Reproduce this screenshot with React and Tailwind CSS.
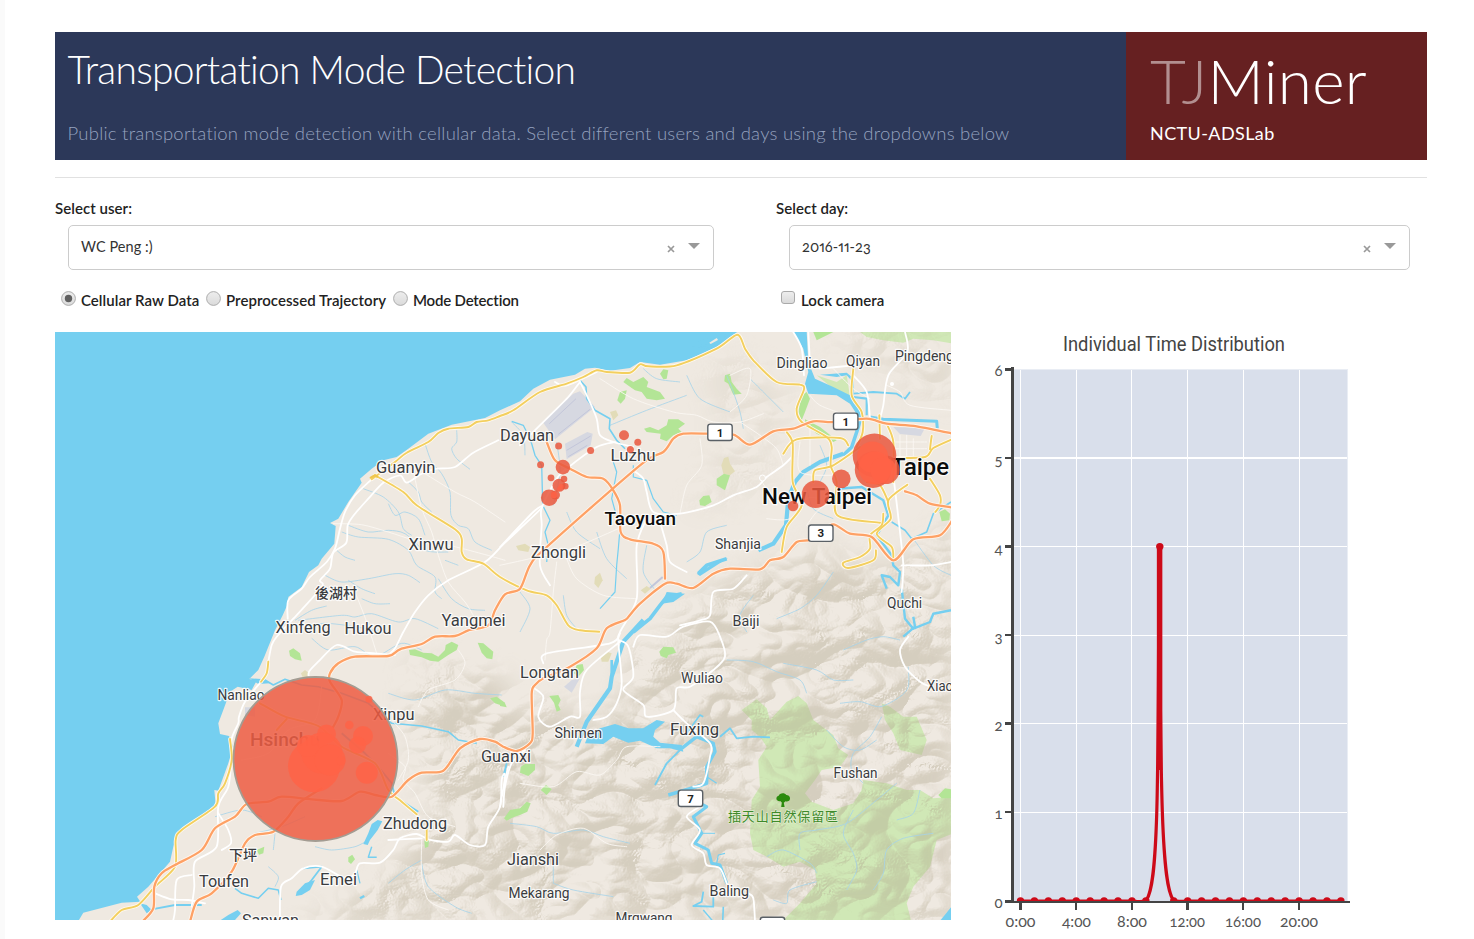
import React from "react";

/* ---------- map geometry ----------
   Every line is a list of points in one of four survey sheets (5, 6, 7, 8),
   each drawn at triple scale. A lone digit switches to that sheet. */
const SHEETS = { 5: [55, 332], 6: [500, 332], 7: [55, 620], 8: [500, 620] };

function points(src) {
  let origin = SHEETS[5];
  const out = [];
  for (const token of src.trim().split(/\s+/)) {
    if (token.indexOf(",") < 0) {
      origin = SHEETS[token];
    } else {
      const [x, y] = token.split(",").map(Number);
      out.push([origin[0] + x / 3, origin[1] + y / 3]);
    }
  }
  return out;
}

const f = (n) => n.toFixed(1);

function straight(src, close) {
  return "M" + points(src).map(([x, y]) => f(x) + " " + f(y)).join("L") + (close ? "Z" : "");
}

function smooth(src) {
  const p = points(src);
  let d = "M" + f(p[0][0]) + " " + f(p[0][1]);
  for (let i = 0; i < p.length - 1; i++) {
    const a = p[i - 1] || p[i];
    const b = p[i];
    const c = p[i + 1];
    const e = p[i + 2] || c;
    const k = 7;
    d += `C${f(b[0] + (c[0] - a[0]) / k)} ${f(b[1] + (c[1] - a[1]) / k)} ${f(c[0] - (e[0] - b[0]) / k)} ${f(c[1] - (e[1] - b[1]) / k)} ${f(c[0])} ${f(c[1])}`;
  }
  return d;
}

const LAND =
  "6 740,-20 700,8 650,45 560,85 480,98 420,90 390,108 330,116 285,107 255,110 225,128 150,143 100,170 60,208 0,235 5 1290,258 1190,278 1120,305 1060,350 1025,375 985,385 950,410 915,440 920,452 880,510 850,560 825,573 842,582 838,635 800,680 790,700 762,720 740,765 700,795 700,812 683,850 660,895 7 628,110 610,150 583,177 605,182 590,210 548,200 525,215 505,270 490,310 495,342 522,348 535,380 520,430 490,512 478,510 482,555 370,636 355,680 345,725 280,800 246,830 256,845 200,848 85,878 66,910 8 1370,910 6 1370,-20";

const ORANGE = [
  "7 262,905 295,865 298,800 320,760 360,735 440,690 480,625 540,590 575,552 640,545 680,530 770,538 860,543 915,515 960,525 1010,530 1060,480 1100,458 1165,452 1215,385 1275,357 1320,365 8 10,380 50,393 90,370 98,340 95,220 105,195 130,175 210,140 290,85 320,25 375,0 6 385,855 420,815 495,755 530,755 580,768 640,725 690,710 780,712 810,685 850,675 890,630 930,624 962,603 1000,577 1050,605 1115,615 1180,685 1240,622 1320,610 1360,560",
  "7 405,905 425,845 470,820 530,755 570,670 600,645 655,635 700,590 730,550 800,505",
  "7 835,320 850,290 860,240 825,185 825,160 850,130 900,110 1000,108 1035,88 1100,72 1140,50 1200,48 5 1240,895 1300,880 1320,835 1350,787 6 60,770 90,700 140,645 420,400 490,360 520,320 550,305 620,305 700,308 750,338 820,298 880,290 940,268 1000,270 1100,260 1160,275 1250,283 1360,305",
  "6 140,330 165,385 210,410 260,435 310,440 340,475 360,520 362,600 390,622 460,635 490,660 495,740",
  "6 1215,478 1250,490 1290,515 1360,527",
];

const YELLOW = [
  "5 950,442 1020,390 1055,362 1120,330 1150,303 1180,290 1240,285 1265,270 1300,265 6 0,252 40,235 120,180 200,155 250,135 290,115 320,120 390,122 420,97 445,103 530,100 650,50 712,8 735,50 760,85 830,150 900,158 912,172 890,230 905,270 980,315 995,345 992,400 1010,450 1012,550 1140,572",
  "5 960,430 1045,480 1085,520 1200,592 1220,620 1220,660 1235,682 1285,695 6 0,735 80,775 140,790 170,820 205,880 240,895 8 298,35",
  "7 640,125 635,160 618,185",
  "7 525,357 530,420 510,490 490,520 480,560 380,630 362,660 360,740 300,800 250,855 200,870 165,905",
  "7 615,250 690,290 790,318 860,380 960,430 1000,510 1040,545 1085,583",
  "7 665,330 695,297",
  "7 1115,628 1115,660",
  "6 1060,110 1055,190 1085,240 1088,300 1070,345",
  "6 860,300 878,335 878,450 905,520 860,585 845,660",
  "6 850,365 890,322 1020,318 1045,340",
  "6 940,450 945,415 1000,400 1080,345",
  "6 1150,545 1145,580 1110,610 1110,650 1080,675 1030,692 1045,708 1120,685 1128,655",
  "6 1222,458 1165,505 1172,560 1130,605 1175,645 1180,680",
  "6 1100,450 1140,460 1165,510",
  "6 1138,250 1140,320",
  "6 1290,440 1320,490 1320,520 1306,540",
  "6 1360,320 1300,348 1275,375 1180,378",
  "6 1160,275 1180,330 1180,450",
  "6 1295,312 1290,352",
];

const WHITE = [
  "5 1330,325 1255,362 1200,405 1145,410 1100,425 1055,452 1035,430 985,452 940,500 900,545 878,580 874,632 835,662 825,710 795,745 800,765 715,860 7 665,50 650,75 640,125",
  "5 950,442 900,490 870,540 855,590 840,650 815,690 765,735 740,770 700,805 698,860",
  "6 0,645 100,540 125,528 5 1350,632 1290,690 1180,745 1120,790 1080,840 1045,900 7 1020,85 1000,105",
  "7 1020,105 960,100 900,95 845,75 790,125 762,155 762,175",
  "7 618,185 570,245 552,290 550,310 530,357 528,430 520,500 490,560 485,680 420,725 418,800 410,860",
  "7 490,580 520,630 528,670 500,690",
  "7 300,820 350,838 400,840 450,850",
  "7 410,765 365,780 360,870 355,900",
  "7 675,905 678,800 710,775 745,745 800,740 870,775 900,760 915,730 975,728 1015,690 1035,655 1085,642 1120,658 1180,665 1200,645 1245,675 1290,675 1300,620 1335,560 1340,480 1350,465 8 10,560 15,500 35,430 75,390",
  "6 240,150 265,200 290,260 300,310 340,330 400,345",
  "6 240,150 205,195 150,250 60,340",
  "6 345,330 290,345 200,410 170,440 125,528 125,580 120,700 150,760",
  "6 400,415 430,440 440,480 460,540 540,545 640,520 700,490 770,465 800,435 850,400 880,370",
  "6 440,560 410,640 410,800 360,900 8 355,65 365,190 350,250 320,290 280,300",
  "6 480,570 500,640 510,690 560,720",
  "6 540,880 600,865 630,850 640,780 700,770 740,730",
  "6 290,120 200,160 165,150",
  "6 880,0 905,50 912,130",
  "6 925,0 930,100",
  "6 1215,0 1222,60 1165,130 1150,220 1140,260",
  "6 1060,130 1100,180 1110,260",
  "6 960,110 1060,100",
  "6 1180,430 1200,600 1210,700 1205,780",
  "6 1205,700 1290,700 1353,690",
  "8 400,80 420,45 500,50 550,20 630,5 660,50 675,110 640,150 570,200 530,205 520,270 440,290 430,255 370,210 400,170 385,80 355,60",
  "8 520,270 560,310 630,370 630,410 610,490 580,500",
  "8 600,560 560,590 600,630 575,675 610,700 620,735 660,745 680,790",
  "8 745,820 760,835 765,905",
  "8 0,560 15,480 25,440",
  "8 95,200 130,230 115,290 150,320 210,290 240,290 240,215 260,150 360,65",
  "8 130,130 140,100 330,70 360,40",
  "8 1225,50 1200,90 1215,140 1260,185 1290,200",
  "7 1000,660 1100,655",
];

const THIN = [
  "5 1110,425 1200,480 1260,510 1350,570",
  "5 835,575 920,578 1000,600 1080,625 1180,640 1280,665 1350,685",
  "5 1080,440 1100,530 1130,600 1150,670 1180,750 1230,810 1255,850",
  "5 900,780 935,870 7 965,100",
  "6 0,700 90,680 200,655 310,610 420,560",
  "6 200,680 230,740 310,790 410,800",
  "6 170,690 160,780 150,900 8 140,60 135,120",
  "6 300,140 400,200 520,240 590,250 640,270 720,270 790,245",
  "6 690,130 750,110 740,190 690,240",
  "6 600,320 605,400 560,460 540,545",
  "6 720,270 780,310 830,350 850,400",
  "6 930,280 930,400",
  "6 900,330 900,420 1000,430",
  "6 1200,310 1200,390",
  "6 1220,310 1220,390",
  "6 1240,320 1240,390",
  "6 1180,330 1280,330",
  "6 1180,350 1280,350",
  "6 1110,200 1060,170 1000,110",
  "6 1160,160 1200,180 1230,220 1353,235",
  "6 930,190 960,220 1040,250",
  "6 1090,520 1030,500 960,530 920,580",
  "6 800,560 870,560 920,500 960,500",
  "6 780,440 830,520",
  "7 1000,400 1050,440 1045,480 1080,520 1120,590 1200,620",
  "7 1010,300 1050,350 1060,420 1030,480",
  "7 870,190 950,240 1000,300",
  "7 1100,660 1100,760 1120,840 1180,870",
  "8 60,490 160,500 230,455 300,465 350,420 380,380 480,380",
  "8 120,690 170,645 250,625 320,670 380,680",
  "7 560,420 640,400 700,330 780,300 800,200",
  "7 1210,90 1230,130 1200,180 1120,210 1090,260",
];

const RIVERS = [
  ["6 240,145 258,165 260,200 285,235 330,260 328,290 350,325 375,350", 1.6],
  ["6 35,268 70,280 85,310 95,335 105,370 125,400 128,520 150,565 135,600 145,640 140,690", 1.3],
  ["6 340,390 350,420 335,500 360,590 355,650 350,700 345,780 300,830", 1.2],
  ["6 400,400 400,435 440,445 460,500 490,540 530,550", 1.2],
  ["6 1030,365 960,390 910,420 885,450 865,500 858,580 820,635 775,655", 4.2],
  ["6 1085,250 1070,300 1055,345 1030,370", 3.6],
  ["6 1100,250 1100,200 1060,195", 2.2],
  ["6 1060,185 1120,180 1190,185 1215,200 1230,180", 1.8],
  ["6 1110,255 1150,262 1230,265 1310,268 1312,290", 3],
  ["6 1010,470 1085,465 1150,505 1165,550 1130,610 1175,670 1180,700 1200,720 1195,760 1170,735 1145,730 1160,770", 2.4],
  ["6 1175,570 1215,595 1235,620 1280,600 1300,545 1353,510", 1.6],
  ["6 1205,770 1215,860 1240,890 1290,870 1300,845 1353,835", 2.4],
  ["8 1240,-10 1245,20 1210,50", 2.4],
  ["6 595,725 620,700 680,680", 3.8],
  ["6 400,900 450,860 480,820 500,795 545,785", 3.6],
  ["8 430,0 370,65 335,170 330,205 260,305 230,380", 4.2],
  ["8 335,170 335,120", 2.6],
  ["8 545,385 590,350 640,370 645,395 620,440 620,490 590,500 505,525", 3.4],
  ["8 660,350 690,325 710,355 760,350 810,352", 1.8],
  ["8 545,385 500,430 465,495", 1.8],
  ["8 600,550 620,560 580,590 605,640 585,670 625,690 635,730 660,735 680,790", 3],
  ["8 605,640 645,640", 1],
  ["8 650,730 655,705 675,700", 1.2],
  ["8 610,815 605,845 580,858 640,860 640,830", 1.8],
  ["8 610,870 640,905", 1.4],
  ["8 670,860 668,905", 1.6],
  ["8 620,470 650,490", 1.2],
  ["8 560,340 600,285 610,290", 1.6],
  ["7 630,180 655,195 690,178 740,195 790,200 860,220 940,250 1010,310 1100,318 1180,335 1210,360 1265,370", 1.6],
  ["7 860,340 930,400 970,440 1010,490 1020,530 1090,575", 1.8],
  ["7 290,868 360,855 440,855", 1.8],
  ["7 540,805 560,820 610,835 640,805 670,810 678,840", 1.6],
  ["7 745,745 800,740 770,780 735,820 760,800", 1.8],
  ["7 950,680 940,712 965,712", 1.4],
  ["7 905,750 915,790", 1.3],
  ["7 915,835 928,828", 2.4],
  ["7 1350,450 1350,470", 1.4],
  ["8 10,470 20,430", 1.8],
];

const BROOKS = [
  "5 1110,335 1130,390 1160,425 1185,480 1188,550 1210,580 1240,590 1260,630 1310,655",
  "5 1205,295 1205,330 1190,350 1205,380 1245,412",
  "5 925,470 985,495 1030,540 1045,590 1070,610",
  "5 1060,450 1090,480 1100,510 1130,540",
  "5 880,580 940,600 1000,595 1050,605 1110,655 1180,660",
  "5 860,600 910,615 1000,622 1060,655 1085,700 1140,735 1140,780 1160,800",
  "5 810,730 860,750 940,740 1020,725 1060,730 1095,752",
  "5 880,745 920,770 960,785",
  "5 920,800 960,815 1005,815",
  "5 720,865 770,835 815,822",
  "5 730,865 860,850 900,855 950,845 1030,870 1080,860 1150,890",
  "5 845,655 870,675 900,685",
  "5 1170,685 1210,700",
  "5 1150,740 1190,800 1240,830 1290,835",
  "5 1000,515 1020,550 1050,540 1090,560 1110,610",
  "6 35,270 70,310 75,370",
  "6 330,280 440,235 560,190",
  "6 430,110 470,140 540,150",
  "6 560,130 600,200 690,240",
  "6 680,130 700,180 720,240 730,290",
  "6 750,140 800,190 850,240",
  "6 170,330 180,420 160,520",
  "6 200,540 230,600 300,650",
  "6 290,600 320,680 380,740",
  "6 440,640 430,720 470,780",
  "6 60,780 90,830 60,900",
  "6 190,790 200,850 230,890",
  "6 560,690 600,660 620,600 680,580",
  "6 960,340 980,400 960,450",
  "6 920,470 940,530 1000,560",
  "6 1000,720 950,790 900,830 830,860",
  "6 760,790 720,850 740,900",
  "6 1240,620 1300,700 1353,730",
  "8 680,120 760,125 830,155 900,180 920,220",
  "8 1030,90 1100,60 1150,50 1200,60",
  "8 1020,250 1080,245 1140,260 1200,230 1225,200 1225,140",
  "8 1145,290 1110,350 1060,400 1055,450 1090,490",
  "8 980,330 1030,380 1080,390 1130,360",
  "8 1190,490 1130,540 1040,610 950,630 900,640 900,690",
  "8 1060,570 1030,640 1060,700 1070,750 1040,810",
  "8 1300,640 1210,655 1160,690 1150,760 1120,810",
  "8 1260,510 1240,580 1190,600",
  "8 950,785 870,810 860,850 820,840",
  "8 800,710 850,690 930,730 950,760",
  "8 160,790 160,720",
  "8 160,790 220,810 340,830",
  "8 30,610 110,620 160,640 250,630 310,650 390,670",
  "8 850,130 950,150 1000,180 1060,180",
  "7 600,640 680,620 750,590",
  "7 780,680 830,690 900,680 940,660",
  "7 480,590 560,570 620,590",
  "7 660,640 655,690",
  "7 640,740 670,770 660,800",
  "7 770,55 820,90 900,80 960,110 1040,70 1100,90",
  "7 760,20 810,10 900,20 1000,40",
  "7 1000,220 1080,240 1170,210 1260,220 1340,225",
  "7 1100,730 1120,800 1200,860 1250,880",
  "7 1000,790 1050,750 1100,720",
];

const GREENS = [
  "6 370,150 380,138 400,150 430,135 445,150 440,165 480,180 495,200 470,205 440,200 425,180 405,175 395,168",
  "6 352,205 360,180 380,175 375,200 362,215",
  "6 480,125 490,112 505,115 500,140 490,142",
  "6 432,290 450,285 475,295 500,280 505,262 535,262 555,275 535,290 545,300 520,310 500,328 480,320 482,305 440,300",
  "6 675,130 690,125 695,150 710,170 725,185 700,188 685,155 673,148",
  "6 650,440 672,425 690,430 675,475 650,460",
  "6 598,505 610,492 628,490 635,510 615,522 600,520",
  "6 905,190 920,180 930,200 915,240 905,265 895,240",
  "6 915,262 960,285 1010,325 1000,330 950,305 915,275",
  "6 1318,540 1335,532 1350,545 1348,565 1325,568",
  "6 940,0 1000,0 970,15 950,25",
  "7 702,92 715,85 735,100 740,122 720,118 705,108",
  "7 1062,90 1080,88 1105,98 1130,100 1150,110 1170,90 1172,75 1190,65 1210,75 1205,90 1180,105 1150,125 1125,122 1100,112 1065,105",
  "7 1268,68 1285,70 1315,95 1312,118 1295,115 1280,98",
  "7 1305,235 1325,230 1350,248 1345,258 1320,250",
  "7 605,690 628,680 625,700 612,704",
  "7 880,712 892,704 900,718 888,732 880,725",
  "7 1108,662 1122,660 1120,680 1110,684",
  "8 478,95 490,80 520,82 528,98 505,105 500,115 482,108",
  "8 148,228 175,225 182,240 175,255 182,270 170,275 162,248",
  "8 62,440 75,432 105,432 105,450 85,468 60,458",
  "8 122,510 138,495 155,508 140,525",
  "8 12,595 30,570 60,565 80,545 92,550 82,575 60,585 40,592 20,602",
  "8 0,240 15,250 20,262 0,258",
  "8 230,135 248,132 252,150 235,170 222,160",
  "8 1315,525 1335,505 1353,508 1353,535 1325,535",
];

const RESERVES = [
  "8 725,270 770,238 800,265 810,300 860,245 895,228 920,250 940,300 1000,345 1015,385 1045,405 1020,440 965,450 945,480 915,520 935,545 1000,570 1060,550 1085,510 1090,480 1160,490 1220,510 1260,510 1300,535 1360,530 1360,640 1310,660 1290,740 1240,800 1220,850 1235,910 840,910 900,850 950,790 945,750 900,725 850,740 800,710 760,690 750,640 755,540 780,500 775,420 800,380 780,350 755,330 755,300",
  "8 1145,250 1170,260 1210,290 1250,290 1280,360 1265,405 1200,390 1180,340 1155,300",
  "6 950,130 1010,150 1040,130 1050,195 1000,170",
  "6 1080,0 1360,0 1360,35 1300,25 1240,20 1210,32 1150,25 1100,15",
];

const SANDS = [
  "6 48,642 75,635 90,645 85,660 55,655",
  "6 285,735 300,722 308,745 295,768 283,755",
  "6 422,775 440,762 452,770 435,785",
  "6 672,378 685,374 690,395 705,418 690,430 670,425 664,400",
  "8 302,110 320,95 335,100 325,125 305,125",
  "6 330,240 348,235 355,250 340,265",
  "7 738,160 750,150 762,160 755,172 742,170",
];

const AIRPORT = [
  "6 128,270 220,185 240,178 285,225 165,322",
  "6 195,335 262,300 278,305 272,340 200,382",
  "6 1180,285 1275,288 1262,312 1200,306",
  "8 192,200 215,180 240,175 215,218",
  "7 570,262 600,262 600,290 570,285",
];

const LAKES = [
  "8 300,325 345,312 385,325 430,325 470,300 495,305 465,330 460,350 480,368 545,375 550,395 510,385 470,385 420,362 385,368 340,350 310,372 255,370 265,345",
  "6 880,0 920,0 925,90 945,140 1000,165 1050,190 1058,150 1040,130 1010,135 960,128 1040,122 1062,140 1060,200 1090,240 1080,262 1050,215 1010,190 925,185 915,155 925,120 910,50",
  "7 583,175 630,178 645,190 610,192",
  "6 590,725 640,695 685,677 650,700 600,732",
  "6 485,815 500,780 555,785 520,810",
  "7 725,815 750,790 780,780 765,810 740,825 722,828",
  "7 950,612 968,600 982,604 968,630 945,660 938,675 925,672 940,640",
  "7 490,905 520,885 548,870 558,880 540,900",
  "8 1322,900 1353,862 1353,900",
  "7 255,850 275,855 290,870 275,880",
];

const LABELS = [
  ["Dayuan", 500, 440.5, 54, 16.5],
  ["Guanyin", 376, 473, 59.5, 16.5],
  ["Luzhu", 610.5, 461, 45, 16.5],
  ["Xinwu", 408.5, 549.5, 45, 16.5],
  ["Zhongli", 531, 557.5, 55, 16.5],
  ["Shanjia", 715, 549, 46, 14.5],
  ["Dingliao", 776.5, 367.5, 51, 14.5],
  ["Qiyan", 846, 366, 34, 14.5],
  ["Pingdeng", 895, 360.5, 59, 14.5],
  ["Quchi", 887, 608, 35, 14.5],
  ["Baiji", 732.5, 626, 27, 14.5],
  ["Xinfeng", 275.5, 632.5, 55, 16.5],
  ["Hukou", 344.5, 634, 47, 16.5],
  ["Yangmei", 441.5, 626, 64, 16.5],
  ["Longtan", 520, 678, 59, 16.5],
  ["Wuliao", 681, 683, 42, 14.5],
  ["Nanliao", 217.5, 700, 47, 14.5],
  ["Xinpu", 373, 720, 41.5, 16.5],
  ["Shimen", 554.5, 737.5, 47.5, 14.5],
  ["Fuxing", 670, 735, 49, 16.5],
  ["Guanxi", 481, 762, 50, 16.5],
  ["Fushan", 833.5, 778, 44, 14.5],
  ["Xiao", 927, 691, 26, 14.5],
  ["Zhudong", 383, 828.5, 64, 16.5],
  ["Jianshi", 507, 865, 52, 16.5],
  ["Toufen", 199, 887, 50, 16.5],
  ["Emei", 320, 884.5, 37, 16.5],
  ["Mekarang", 508.5, 898, 61, 14.5],
  ["Baling", 709.5, 896, 39.5, 14.5],
  ["Sanwan", 242, 926, 57, 16.5],
  ["Mrqwang", 615.5, 923, 57, 14.5],
];

const CITIES = [
  ["New Taipei", 762, 504, 110, 22],
  ["Taipe", 891, 474.5, 58, 24],
  ["Taoyuan", 604.5, 525, 71.5, 19],
];

const DOTS = [
  [624, 435.3, 5], [637.8, 442.3, 3.5], [630.4, 449.5, 3.5], [558.6, 446, 3.5], [590.6, 450.6, 3.5],
  [540.6, 464.8, 3.5], [562.9, 467.1, 7.3], [551, 477.8, 3.4], [564, 479, 3.3], [559, 485.3, 6.5],
  [565.3, 486.2, 3.3], [549.2, 497.7, 8.3], [555.5, 495, 4.5],
  [793, 506, 5.3], [815.6, 494.2, 13.8], [841.3, 478.8, 9.3],
  [874.5, 455.3, 21.8], [873, 469.8, 18.2], [885.4, 469.8, 14.3],
];

/* Places where several records pile up */
const DENSE_DOTS = [
  [872.6, 457, 15.5], [875, 468, 16.5], [883.5, 470.5, 13], [561, 486.5, 2.5], [554, 495, 3.2], [559, 489, 2.2],
  [369, 699.3, 3.5], [349.3, 725, 4.3], [363, 736, 10], [357.5, 745, 8.6], [366.8, 772.8, 11],
  [314, 766.2, 26], [326.5, 734, 9.5], [322, 753, 20.5], [308, 746, 11], [330, 760, 15.5], [341, 760.8, 4.5],
];

const MOUNTAINS =
  "8 -650,910 7 850,860 960,800 1060,700 1150,560 1090,440 1060,240 1080,130 1180,140 1350,180 8 60,300 180,240 270,330 360,240 400,120 560,0 6 520,880 600,800 740,730 860,690 960,640 1060,700 1180,720 1280,650 1360,560 8 1370,910";
const FOOTHILLS = "6 560,540 640,400 660,250 600,120 680,60 760,90 870,180 870,260 820,330 800,450 720,500";
const NORTH_HILLS = "6 960,0 1360,0 1360,220 1250,180 1180,100 1040,60";

function Shield({ x, y, n }) {
  return (
    <g>
      <rect x={x - 12.2} y={y - 8.2} width="24.4" height="16.4" rx="2.6" fill="#fff" stroke="#5a6066" strokeWidth="1.4" />
      {n && <text x={x} y={y + 4.2} textAnchor="middle" fontSize="11.5" fontWeight="700" fill="#222" fontFamily="Roboto, sans-serif">{n}</text>}
    </g>
  );
}

function PlaceMap() {
  return (
    <svg className="block h-[588px] w-[896px] shrink-0" viewBox="55 332 896 588" fontFamily="Roboto, 'Noto Sans CJK TC', sans-serif">
      <defs>
        <filter id="relief" x="0" y="0" width="100%" height="100%" colorInterpolationFilters="sRGB">
          <feTurbulence type="turbulence" baseFrequency="0.011 0.015" numOctaves="3" seed="8" />
          <feColorMatrix values="0 0 0 0 0  0 0 0 0 0  0 0 0 0 0  1 0 0 0 0" />
          <feDiffuseLighting surfaceScale="30" diffuseConstant="1" lightingColor="#fff">
            <feDistantLight azimuth="225" elevation="48" />
          </feDiffuseLighting>
          <feColorMatrix values="0 0 0 0 0.70  0 0 0 0 0.66  0 0 0 0 0.56  -0.85 0 0 0 0.76" />
          <feComponentTransfer>
            <feFuncA type="table" tableValues="0 0.15 0.26 0.38 0.42 0.44" />
          </feComponentTransfer>
        </filter>
        <filter id="feather" x="-10%" y="-10%" width="120%" height="120%">
          <feGaussianBlur stdDeviation="14" />
        </filter>
        <mask id="hills" maskUnits="userSpaceOnUse" x="55" y="332" width="896" height="588">
          <g filter="url(#feather)">
            <path d={straight(MOUNTAINS, true)} fill="#fff" />
            <path d={straight(FOOTHILLS, true)} fill="#555" />
            <path d={straight(NORTH_HILLS, true)} fill="#999" />
          </g>
        </mask>
      </defs>

      <rect x="55" y="332" width="896" height="588" fill="#75cff0" />
      <path d={straight(LAND, true)} fill="#efe9e1" />
      <path d={straight("6 628,32 650,18 654,24 632,36", true)} fill="#efe9e1" />
      {RESERVES.map((d) => <path key={d} d={straight(d, true)} fill="#d0e8b6" />)}
      <g mask="url(#hills)">
        <rect x="55" y="332" width="896" height="588" filter="url(#relief)" />
      </g>
      {SANDS.map((d) => <path key={d} d={straight(d, true)} fill="#e2dcb8" />)}
      {GREENS.map((d) => <path key={d} d={straight(d, true)} fill="#b3e596" />)}
      {AIRPORT.map((d) => <path key={d} d={straight(d, true)} fill="#d6d8e1" />)}
      <g fill="none" stroke="#c3c6da" strokeWidth="1">
        <path d={straight("6 148,275 228,200")} />
        <path d={straight("6 175,307 270,232")} />
        <path d={straight("6 200,355 272,312")} />
        <path d={straight("6 205,374 262,340")} />
        <path d={straight("6 450,768 488,735")} strokeWidth="2" />
      </g>
      <g fill="none" stroke="#a5d3ea" strokeWidth="0.8" strokeLinejoin="round">
        {BROOKS.map((d) => <path key={d} d={smooth(d)} />)}
      </g>
      <g fill="none" stroke="#75cff0" strokeLinejoin="round">
        {RIVERS.map(([d, w]) => <path key={d} d={straight(d)} strokeWidth={w} />)}
      </g>
      {LAKES.map((d) => <path key={d} d={straight(d, true)} fill="#75cff0" />)}
      <g fill="none" strokeLinejoin="round" strokeLinecap="round">
        <g stroke="#faf7f3" strokeWidth="0.9">{THIN.map((d) => <path key={d} d={smooth(d)} />)}</g>
        <g stroke="#fff" strokeWidth="1.8">{WHITE.map((d) => <path key={d} d={smooth(d)} />)}</g>
        <g stroke="#fffaf0" strokeWidth="3.6">{YELLOW.map((d) => <path key={d} d={smooth(d)} />)}</g>
        <g stroke="#f3cf5e" strokeWidth="1.9">{YELLOW.map((d) => <path key={d} d={smooth(d)} />)}</g>
        <g stroke="#fff6ee" strokeWidth="4">{ORANGE.map((d) => <path key={d} d={smooth(d)} />)}</g>
        <g stroke="#fea165" strokeWidth="2.3">{ORANGE.map((d) => <path key={d} d={smooth(d)} />)}</g>
        <path d={straight("5 947,437 960,430 967,434")} stroke="#f0c64c" strokeWidth="2.2" />
        <circle cx="762.5" cy="478" r="3" fill="#efe9e1" stroke="#fff" />
        <circle cx="892" cy="384" r="2" fill="#fff" />
      </g>

      <Shield x={720} y={432.3} n="1" />
      <Shield x={845.7} y={421.3} n="1" />
      <Shield x={820.8} y={533.2} n="3" />
      <Shield x={690.5} y={798.3} n="7" />
      <Shield x={772.5} y={925.5} />

      <g fill="#3a3c40" stroke="#fff" strokeOpacity="0.85" strokeWidth="2.4" strokeLinejoin="round" style={{ paintOrder: "stroke" }}>
        {LABELS.map(([t, x, y, w, s]) => (
          <text key={t} x={x} y={y} fontSize={s} textLength={w} lengthAdjust="spacingAndGlyphs">{t}</text>
        ))}
        <text x="315" y="598" fontSize="14" fontWeight="500" textLength="42">後湖村</text>
        <text x="229" y="860" fontSize="14" fontWeight="500" textLength="28">下坪</text>
        <text x="250" y="746" fontSize="19" fontWeight="500" textLength="70" lengthAdjust="spacingAndGlyphs">Hsinchu</text>
        <g fill="#0c0c0c" fontWeight="500">
          {CITIES.map(([t, x, y, w, s]) => (
            <text key={t} x={x} y={y} fontSize={s} textLength={w} lengthAdjust="spacingAndGlyphs">{t}</text>
          ))}
        </g>
      </g>
      <text x="728" y="821" fontSize="13" textLength="110" fill="#3f8a2b" stroke="#e4efd4" strokeWidth="1.2" style={{ paintOrder: "stroke" }}>插天山自然保留區</text>
      <path d="M777.500 800.500c-2-1.500-1-4.500 1.200-4.800.6-2.800 6.200-3.400 7.600-.6 2.700-.3 4.700 2.800 3.300 5-.8 1.500-2.800 1.700-4.100 1.100l-1.700 1.600.8 4.200h-3.400l.6-4.400-1.600-1.600c-1 .4-2 .2-2.700-.5z" fill="#2c8a0e" />

      <circle cx="315.500" cy="759" r="82" fill="#ed5c42" fillOpacity="0.85" stroke="#a39c92" strokeWidth="1.8" />
      <g fill="#e9583f" fillOpacity="0.86">
        {DOTS.map(([x, y, r]) => <circle key={x + "-" + y} cx={x} cy={y} r={r} />)}
      </g>
      <g fill="#ff6347" fillOpacity="0.82">
        {DENSE_DOTS.map(([x, y, r]) => <circle key={x + "-" + y} cx={x} cy={y} r={r} />)}
      </g>
    </svg>
  );
}

const HOURS = Array.from({ length: 24 }, (_, h) => h);
const hourX = (h) => 1020.5 + h * 13.93;
const valueY = (v) => 901 - v * 88.6;

function TimeChart() {
  return (
    <svg className="ml-[19px] block h-[607px] w-[400px] shrink-0 oldstyle-nums" viewBox="970 332 400 607" fontFamily="Lato, 'Open Sans', sans-serif">
      <defs>
        <clipPath id="plot"><rect x="1012" y="369" width="337" height="532" /></clipPath>
      </defs>
      <text x="1063" y="351" fontSize="20" fill="#444" textLength="222" lengthAdjust="spacingAndGlyphs" fontFamily="Roboto, sans-serif">Individual Time Distribution</text>
      <rect x="1013" y="369" width="335" height="532" fill="#d9dfeb" />
      <g stroke="#fff" strokeWidth="1" shapeRendering="crispEdges">
        {[0, 4, 8, 12, 16, 20].map((h) => <line key={h} x1={hourX(h)} x2={hourX(h)} y1="369" y2="901" />)}
        {[1, 2, 3, 4].map((v) => <line key={v} x1="1013" x2="1348" y1={valueY(v)} y2={valueY(v)} />)}
        <line x1="1013" x2="1348" y1="458" y2="458" strokeWidth="2" />
        <path d="M1013 369.500H1347.500V901" fill="none" stroke="#e9edf4" />
      </g>
      <g stroke="#cd0a18" fill="none" strokeWidth="3.200" clipPath="url(#plot)">
        <path d="M1020.500 901H1132C1138 901.500 1142 902.500 1146 900.500C1158 886 1158.300 800 1159 546.500C1160.600 800 1161.500 886 1173.700 900.500C1178 902.500 1182 901 1187.700 901H1341" />
        <path d="M1159.600 770V549" strokeWidth="5.500" />
        <g fill="#cd0a18" stroke="none">
          {HOURS.map((h) => <circle key={h} cx={hourX(h)} cy={valueY(h === 10 ? 4 : 0)} r="3.700" />)}
        </g>
      </g>
      <g stroke="#444" shapeRendering="crispEdges">
        <line x1="1012.500" x2="1012.500" y1="367" y2="903" strokeWidth="3" />
        <line x1="1011" x2="1350" y1="902" y2="902" strokeWidth="2" />
        {[0, 1, 2, 3, 4, 5, 6].map((v) => <line key={v} x1="1005" x2="1012" y1={valueY(v)} y2={valueY(v)} strokeWidth={v % 2 ? 2 : 3} />)}
        {[0, 4, 8, 12, 16, 20].map((h) => <line key={h} x1={hourX(h)} x2={hourX(h)} y1="903" y2="910" strokeWidth={h % 12 ? 2 : 3} />)}
      </g>
      <g fontSize="15" fill="#555">
        {[0, 1, 2, 3, 4, 5, 6].map((v) => <text key={v} x="1002.500" y={valueY(v) + 7} textAnchor="end">{v}</text>)}
        {[["0:00", 1005.500, 30], ["4:00", 1062, 29], ["8:00", 1117, 30], ["12:00", 1169.500, 35.500], ["16:00", 1225, 36], ["20:00", 1280, 38]].map(([t, x, w]) => (
          <text key={t} x={x} y="927" textLength={w} lengthAdjust="spacingAndGlyphs">{t}</text>
        ))}
      </g>
    </svg>
  );
}

function Select({ value, className }) {
  return (
    <div className={"ml-[13px] mt-[7px] flex h-[45px] items-center rounded-[5px] border border-[#ccc] pl-3 pr-[13px] oldstyle-nums proportional-nums " + className}>
      <span className="-mt-0.5 flex-1 text-[14.5px] text-[#333]">{value}</span>
      <svg className="mr-[13px] mt-[3px] h-2 w-2" viewBox="0 0 8 8"><path d="M1 1L7 7M7 1L1 7" stroke="#999" strokeWidth="1.700" /></svg>
      <svg className="mb-[3px] h-[6px] w-3" viewBox="0 0 12 6"><path d="M0 0H12L6 6Z" fill="#999" /></svg>
    </div>
  );
}

function Radio({ label, checked, className }) {
  return (
    <label className={"flex h-[22px] items-center " + className}>
      <svg className="-mt-1.5 mr-[5px] h-[15px] w-[15px]" viewBox="0 0 15 15">
        <defs>
          <linearGradient id="knob" x1="0" y1="0" x2="0" y2="1">
            <stop offset="0" stopColor="#eeeeee" />
            <stop offset="1" stopColor="#dadada" />
          </linearGradient>
        </defs>
        <circle cx="7.500" cy="7.500" r="6.900" fill="url(#knob)" stroke="#adadad" />
        {checked && <circle cx="7.500" cy="7.500" r="3.700" fill="#606060" />}
      </svg>
      <span className="-mt-0.5">{label}</span>
    </label>
  );
}

export default function App() {
  return (
    <div className="flex h-[939px] w-[1474px] overflow-hidden bg-white font-['Lato','Open_Sans',sans-serif] text-[#222]">
      <div className="w-[5px] shrink-0 bg-[#fafafa]" />
      <main className="ml-[50px] w-[1372px] shrink-0 pt-8">
        <header className="flex h-32 text-white">
          <div className="w-[1071px] shrink-0 bg-[#2c3859] pl-[12.5px] pt-3">
            <h1 className="whitespace-nowrap text-[39px] font-light leading-[50px] tracking-[-0.73px]">Transportation Mode Detection</h1>
            <p className="mt-[26px] whitespace-nowrap text-[18.5px] font-light leading-[26px] tracking-[0.24px] text-[#95a2bf]">Public transportation mode detection with cellular data. Select different users and days using the dropdowns below</p>
          </div>
          <div className="flex-1 bg-[#662021] pl-6 pt-3">
            <div className="h-[76px] whitespace-nowrap text-[62px] font-light leading-[72px] tracking-[0.3px]"><span className="text-[#b28f90]">TJ</span>Miner</div>
            <p className="text-[18px] leading-[26px] tracking-[0.4px]">NCTU-ADSLab</p>
          </div>
        </header>
        <div className="mt-[17px] h-px bg-[#e1e1e1]" />
        <section className="flex h-[154px] pt-5 text-[15px] font-semibold leading-5 tracking-[0.05px]">
          <div className="w-[721px]">
            <div>Select user:</div>
            <Select value="WC Peng :)" className="w-[646px] font-normal" />
            <div className="ml-1.5 mt-5 flex whitespace-nowrap">
              <Radio label="Cellular Raw Data" checked className="w-[145px]" />
              <Radio label="Preprocessed Trajectory" className="w-[187px]" />
              <Radio label="Mode Detection" className="tracking-[-0.2px]" />
            </div>
          </div>
          <div>
            <div>Select day:</div>
            <Select value="2016-11-23" className="w-[621px] font-normal" />
            <label className="ml-[5px] mt-5 flex h-[22px] items-center">
              <span className="-mt-2 mr-[6px] h-[13px] w-[14px] rounded-[3px] border border-[#aaa] bg-linear-to-b from-[#eeeeee] to-[#dadada]" />
              <span className="-mt-0.5">Lock camera</span>
            </label>
          </div>
        </section>
        <section className="flex">
          <PlaceMap />
          <TimeChart />
        </section>
      </main>
    </div>
  );
}
